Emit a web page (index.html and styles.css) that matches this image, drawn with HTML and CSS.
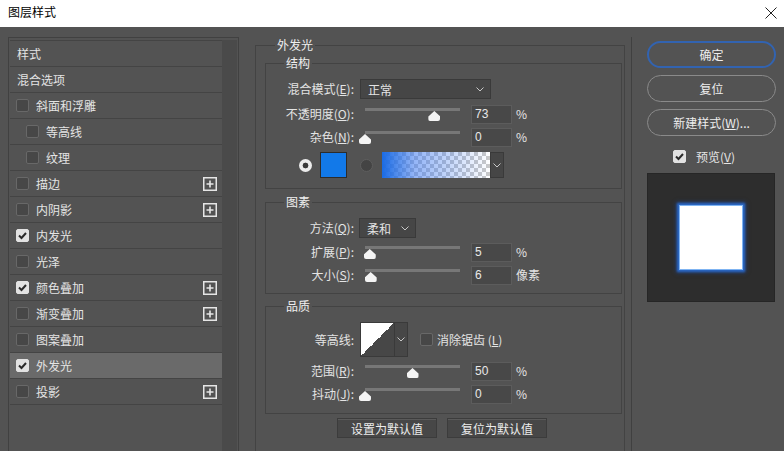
FILE: index.html
```html
<!DOCTYPE html>
<html lang="zh-CN">
<head>
<meta charset="utf-8">
<title>图层样式</title>
<link rel="stylesheet" href="styles.css">
</head>
<body>
<header class="titlebar">
  <span class="title">图层样式</span>
  <svg class="close" width="12" height="12" viewBox="0 0 12 12"><path d="M0.5 0.5 L11.5 11.5 M11.5 0.5 L0.5 11.5" stroke="#222" stroke-width="1" fill="none"/></svg>
</header>
<div class="main">
  <aside class="styles-panel">
    <ul class="style-list">
      <li class="style-item plain"><span class="item-label">样式</span></li>
      <li class="style-item plain"><span class="item-label">混合选项</span></li>
      <li class="style-item"><span class="check"></span><span class="item-label">斜面和浮雕</span></li>
      <li class="style-item sub"><span class="check"></span><span class="item-label">等高线</span></li>
      <li class="style-item sub"><span class="check"></span><span class="item-label">纹理</span></li>
      <li class="style-item"><span class="check"></span><span class="item-label">描边</span><svg class="plus" width="14" height="14" viewBox="0 0 14 14"><rect x="0.75" y="0.75" width="12.5" height="12.5" fill="none" stroke="#e6e6e6" stroke-width="1.5"/><path d="M7 3.5 V10.5 M3.5 7 H10.5" stroke="#e6e6e6" stroke-width="1.6"/></svg></li>
      <li class="style-item"><span class="check"></span><span class="item-label">内阴影</span><svg class="plus" width="14" height="14" viewBox="0 0 14 14"><rect x="0.75" y="0.75" width="12.5" height="12.5" fill="none" stroke="#e6e6e6" stroke-width="1.5"/><path d="M7 3.5 V10.5 M3.5 7 H10.5" stroke="#e6e6e6" stroke-width="1.6"/></svg></li>
      <li class="style-item"><span class="check on"><svg width="11" height="11" viewBox="0 0 11 11"><path d="M2 5.5 L4.5 8 L9 3" stroke="#2a2a2a" stroke-width="2" fill="none"/></svg></span><span class="item-label">内发光</span></li>
      <li class="style-item"><span class="check"></span><span class="item-label">光泽</span></li>
      <li class="style-item"><span class="check on"><svg width="11" height="11" viewBox="0 0 11 11"><path d="M2 5.5 L4.5 8 L9 3" stroke="#2a2a2a" stroke-width="2" fill="none"/></svg></span><span class="item-label">颜色叠加</span><svg class="plus" width="14" height="14" viewBox="0 0 14 14"><rect x="0.75" y="0.75" width="12.5" height="12.5" fill="none" stroke="#e6e6e6" stroke-width="1.5"/><path d="M7 3.5 V10.5 M3.5 7 H10.5" stroke="#e6e6e6" stroke-width="1.6"/></svg></li>
      <li class="style-item"><span class="check"></span><span class="item-label">渐变叠加</span><svg class="plus" width="14" height="14" viewBox="0 0 14 14"><rect x="0.75" y="0.75" width="12.5" height="12.5" fill="none" stroke="#e6e6e6" stroke-width="1.5"/><path d="M7 3.5 V10.5 M3.5 7 H10.5" stroke="#e6e6e6" stroke-width="1.6"/></svg></li>
      <li class="style-item"><span class="check"></span><span class="item-label">图案叠加</span></li>
      <li class="style-item selected"><span class="check on"><svg width="11" height="11" viewBox="0 0 11 11"><path d="M2 5.5 L4.5 8 L9 3" stroke="#2a2a2a" stroke-width="2" fill="none"/></svg></span><span class="item-label">外发光</span></li>
      <li class="style-item"><span class="check"></span><span class="item-label">投影</span><svg class="plus" width="14" height="14" viewBox="0 0 14 14"><rect x="0.75" y="0.75" width="12.5" height="12.5" fill="none" stroke="#e6e6e6" stroke-width="1.5"/><path d="M7 3.5 V10.5 M3.5 7 H10.5" stroke="#e6e6e6" stroke-width="1.6"/></svg></li>
    </ul>
    <div class="scroll"></div>
  </aside>

  <section class="settings">
    <fieldset class="group outer">
      <legend>外发光</legend>

      <fieldset class="group section structure">
        <legend>结构</legend>
        <div class="row r-select">
          <span class="lbl">混合模式(<u>E</u>):</span>
          <div class="select wide"><span>正常</span><svg width="8" height="5" viewBox="0 0 8 5"><path d="M0.5 0.5 L4 4 L7.5 0.5" stroke="#c8c8c8" fill="none"/></svg></div>
        </div>
        <div class="row r-slider first">
          <span class="lbl">不透明度(<u>O</u>):</span>
          <div class="slider"><div class="track"><span class="thumb" style="left:73%"></span></div></div>
          <span class="num">73</span><span class="unit">%</span>
        </div>
        <div class="row r-slider">
          <span class="lbl">杂色(<u>N</u>):</span>
          <div class="slider"><div class="track"><span class="thumb" style="left:0%"></span></div></div>
          <span class="num">0</span><span class="unit">%</span>
        </div>
        <div class="row r-color">
          <span class="radio on"></span>
          <span class="swatch"></span>
          <span class="radio"></span>
          <span class="gradient"></span>
          <span class="grad-drop"><svg width="8" height="5" viewBox="0 0 8 5"><path d="M0.5 0.5 L4 4 L7.5 0.5" stroke="#c8c8c8" fill="none"/></svg></span>
        </div>
      </fieldset>

      <fieldset class="group section elements">
        <legend>图素</legend>
        <div class="row r-select">
          <span class="lbl">方法(<u>Q</u>):</span>
          <div class="select narrow"><span>柔和</span><svg width="8" height="5" viewBox="0 0 8 5"><path d="M0.5 0.5 L4 4 L7.5 0.5" stroke="#c8c8c8" fill="none"/></svg></div>
        </div>
        <div class="row r-slider first-e">
          <span class="lbl">扩展(<u>P</u>):</span>
          <div class="slider"><div class="track"><span class="thumb" style="left:5%"></span></div></div>
          <span class="num">5</span><span class="unit">%</span>
        </div>
        <div class="row r-slider">
          <span class="lbl">大小(<u>S</u>):</span>
          <div class="slider"><div class="track"><span class="thumb" style="left:6%"></span></div></div>
          <span class="num">6</span><span class="unit">像素</span>
        </div>
      </fieldset>

      <fieldset class="group section quality">
        <legend>品质</legend>
        <div class="row r-contour">
          <span class="lbl">等高线:</span>
          <span class="contour"></span>
          <span class="contour-drop"><svg width="8" height="5" viewBox="0 0 8 5"><path d="M0.5 0.5 L4 4 L7.5 0.5" stroke="#c8c8c8" fill="none"/></svg></span>
          <span class="check aa"></span>
          <span class="aa-label">消除锯齿 (<u>L</u>)</span>
        </div>
        <div class="row r-slider first-q">
          <span class="lbl">范围(<u>R</u>):</span>
          <div class="slider"><div class="track"><span class="thumb" style="left:50%"></span></div></div>
          <span class="num">50</span><span class="unit">%</span>
        </div>
        <div class="row r-slider">
          <span class="lbl">抖动(<u>J</u>):</span>
          <div class="slider"><div class="track"><span class="thumb" style="left:0%"></span></div></div>
          <span class="num">0</span><span class="unit">%</span>
        </div>
      </fieldset>

      <div class="defaults">
        <span class="dbtn">设置为默认值</span>
        <span class="dbtn">复位为默认值</span>
      </div>
    </fieldset>
  </section>

  <aside class="actions">
    <span class="btn primary">确定</span>
    <span class="btn">复位</span>
    <span class="btn">新建样式(<u>W</u>)...</span>
    <div class="preview-toggle">
      <span class="check on"><svg width="11" height="11" viewBox="0 0 11 11"><path d="M2 5.5 L4.5 8 L9 3" stroke="#2a2a2a" stroke-width="2" fill="none"/></svg></span>
      <span>预览(<u>V</u>)</span>
    </div>
    <div class="preview"><div class="preview-square"></div></div>
  </aside>
</div>
</body>
</html>
```
FILE: styles.css
```css
* { box-sizing: border-box; }
html, body { margin: 0; padding: 0; }
body {
  width: 784px;
  height: 451px;
  overflow: hidden;
  background: #535353;
  font-family: "Noto Sans CJK SC", "Microsoft YaHei", sans-serif;
  font-size: 12px;
  color: #e4e4e4;
}
u { text-decoration-thickness: 1px; text-underline-offset: 1px; }

.titlebar {
  height: 27px;
  background: #ffffff;
  color: #000;
  display: flex;
  align-items: center;
  justify-content: space-between;
  padding: 0 7px 3px 8px;
}
.title { line-height: 16px; }
.close { display: block; margin-top: 1px; }

.main {
  display: flex;
  align-items: flex-start;
  padding: 10px 0 0 8px;
  height: 424px;
}

/* left list */
.styles-panel {
  width: 231px;
  height: 420px;
  flex: none;
  border: 1px solid #414141;
  padding: 2px 1px 0 1px;
  display: flex;
}
.style-list {
  width: 212px;
  list-style: none;
  margin: 0;
  padding: 0;
  border-top: 1px solid #444;
}
.scroll { width: 15px; background: #4a4a4a; }
.style-item {
  height: 26px;
  border-bottom: 1px solid #444;
  display: flex;
  align-items: center;
  gap: 7px;
  padding: 0 5px 0 6px;
}
.style-item.plain { padding-left: 7px; }
.style-item.sub { padding-left: 16px; }
.style-item.selected { background: #6a6a6a; }
.item-label { flex: 1; line-height: 16px; }
.plus { display: block; flex: none; }

.check {
  width: 13px;
  height: 13px;
  flex: none;
  border: 1px solid #686868;
  background: #474747;
  border-radius: 2px;
  display: flex;
  align-items: center;
  justify-content: center;
}
.check.on { background: #e2e2e2; border-color: #e2e2e2; }
.check svg { display: block; }

/* settings */
.settings {
  margin-left: 14px;
  width: 379px;
  flex: none;
  height: 430px;
  padding: 0 6px 0 2px;
  border-right: 1px solid #404040;
}
.group {
  border: 1px solid #434343;
  margin: 0;
  padding: 0;
  min-width: 0;
}
.group > legend {
  padding: 0 2px;
  margin-left: 18px;
  line-height: 16px;
  color: #efefef;
}
.group.outer {
  width: 370px;
  height: 440px;
  padding: 2px 2px 0 9px;
}
.group.outer > legend { margin-left: 10px; }
.group.section { width: 357px; }
.group.structure { padding: 8px 0 10px 0; }
.group.elements { margin-top: 5px; padding: 8px 0 8px 0; }
.group.quality { margin-top: 4px; padding: 8px 0 9px 0; }

.row { display: flex; align-items: center; height: 20px; }
.lbl { width: 88px; text-align: right; margin-right: 6px; flex: none; line-height: 16px; }
.r-slider { margin-top: 3px; }
.structure .r-slider.first { margin-top: 5px; }
.elements .r-slider.first-e { margin-top: 4px; }
.quality .r-slider.first-q { margin-top: 4px; }

.select {
  height: 20px;
  background: #464646;
  border: 1px solid #3a3a3a;
  display: flex;
  align-items: center;
  justify-content: space-between;
  padding: 0 6px 0 7px;
}
.select.wide { width: 131px; }
.select.narrow { width: 57px; margin-left: -1px; }
.select svg { display: block; }

.slider { width: 100px; height: 20px; padding-left: 5px; }
.track {
  position: relative;
  width: 95px;
  height: 3px;
  margin-top: 4px;
  background: #777;
}
.thumb {
  position: absolute;
  top: 3px;
  width: 12px;
  height: 10px;
  margin-left: -6px;
  background: #f4f4f4;
  clip-path: polygon(50% 0, 100% 55%, 100% 100%, 0 100%, 0 55%);
  border-radius: 2px;
}
.num {
  width: 41px;
  height: 19px;
  margin-left: 11px;
  background: #484848;
  border: 1px solid #5c5c5c;
  padding-left: 3px;
  line-height: 17px;
  font-family: "Liberation Sans", "Noto Sans CJK SC", sans-serif;
  color: #e8e8e8;
}
.unit { margin-left: 4px; line-height: 16px; font-family: "Noto Sans CJK SC", sans-serif; }

.r-color { height: 26px; margin-top: 5px; padding-left: 33px; }
.radio {
  width: 13px;
  height: 13px;
  border-radius: 50%;
  background: #444;
  border: 1px solid #5e5e5e;
  flex: none;
}
.radio.on {
  border: none;
  background: radial-gradient(circle, #3a3a3a 0 2.6px, #ececec 3.2px);
}
.swatch {
  width: 27px;
  height: 26px;
  margin: 0 13px 0 8px;
  background: #1279e9;
  border: 1px solid #2c2c2c;
  flex: none;
}
.gradient {
  width: 108px;
  height: 26px;
  margin-left: 9px;
  background:
    linear-gradient(to right, #1a6be4 0%, rgba(60, 120, 240, 0.55) 30%, rgba(80, 130, 240, 0) 100%),
    repeating-conic-gradient(#c9c9c9 0 25%, #ffffff 0 50%) 0 0 / 8px 8px;
  flex: none;
}
.grad-drop {
  width: 14px;
  height: 26px;
  background: #464646;
  border: 1px solid #3a3a3a;
  display: flex;
  align-items: center;
  justify-content: center;
}

.r-contour { height: 35px; }
.contour {
  width: 35px;
  height: 35px;
  border: 1px solid #3a3a3a;
  background: linear-gradient(to bottom right, #ffffff 50%, #474747 50%);
  flex: none;
}
.contour-drop {
  width: 13px;
  height: 35px;
  background: #474747;
  border: 1px solid #3a3a3a;
  border-left: none;
  display: flex;
  align-items: center;
  justify-content: center;
}
.check.aa { margin-left: 12px; }
.aa-label { margin-left: 4px; line-height: 16px; }

.defaults {
  display: flex;
  justify-content: center;
  gap: 10px;
  margin-top: 4px;
  padding-right: 3px;
}
.dbtn {
  width: 100px;
  height: 20px;
  background: #474747;
  border: 1px solid #3c3c3c;
  box-shadow: inset 0 1px 0 #5a5a5a;
  display: flex;
  align-items: center;
  justify-content: center;
  color: #ececec;
}

/* right column */
.actions {
  margin-left: 15px;
  width: 129px;
  flex: none;
  padding-top: 4px;
  display: flex;
  flex-direction: column;
}
.btn {
  height: 27px;
  margin-bottom: 7px;
  border: 1px solid #8a8a8a;
  border-radius: 14px;
  display: flex;
  align-items: center;
  justify-content: center;
  color: #eeeeee;
  line-height: 16px;
}
.btn.primary { border: 2px solid #3263b0; }
.preview-toggle {
  display: flex;
  align-items: center;
  gap: 10px;
  height: 16px;
  margin-top: 5px;
  padding-left: 26px;
}
.preview {
  width: 128px;
  height: 129px;
  margin-top: 9px;
  background: #2d2d2d;
  border: 1px solid #262626;
  display: flex;
  align-items: center;
  justify-content: center;
}
.preview-square {
  width: 64px;
  height: 65px;
  background: #ffffff;
  border: 1.5px solid #7fb4f2;
  box-shadow: 0 0 2px 2px #2a66c4, 0 0 4px 3px rgba(30, 80, 170, 0.5);
}
```
